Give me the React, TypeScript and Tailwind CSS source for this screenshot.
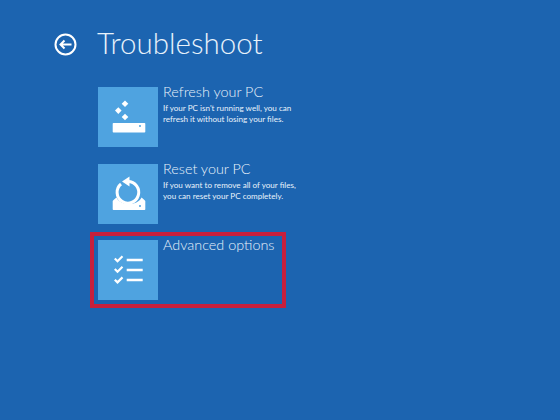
import { ReactNode } from "react";

function RefreshIcon() {
  return (
    <svg width="60" height="60" viewBox="0 0 60 60" fill="#fff">
      <path d="M27 13.500l3.300 3.300-3.300 3.300-3.300-3.300z" />
      <path d="M20.300 20.300l3.300 3.300-3.300 3.300-3.300-3.300z" />
      <path d="M27 26.700l3.300 3.300-3.300 3.300-3.300-3.300z" />
      <path fillRule="evenodd" d="M15.500 36h31a.8.8 0 0 1 .8.8v8a.8.800 0 0 1-.8.8h-31a.8.800 0 0 1-.8-.8v-8a.8.800 0 0 1 .8-.8zm26.500 2a1 1 0 1 0 0 2 1 1 0 0 0 0-2z" />
    </svg>
  );
}

function ResetIcon() {
  return (
    <svg width="60" height="60" viewBox="0 0 60 60" fill="#fff">
      <path fillRule="evenodd" d="M18.500 33.500c-1 1-3.300 2.500-3.800 3.500v8.200a.8.800 0 0 0 .8.8h31a.8.800 0 0 0 .8-.8V37c-.5-1-2.800-2.500-3.800-3.500-2 4-6.300 6.500-12.500 6.500s-10.500-2.500-12.500-6.500zm23.500 7.500a1 1 0 1 0 0 2 1 1 0 0 0 0-2z" />
      <path d="M23 20a10.800 10.800 0 1 0 7-2.500" fill="none" stroke="#fff" strokeWidth="3" />
      <path d="M31.500 12.500v10l-7.500-5z" />
    </svg>
  );
}

function OptionsIcon() {
  return (
    <svg width="60" height="60" viewBox="0 0 60 60" fill="none" stroke="#fff">
      <path d="M16.800 18.500l2.700 2.700 5-5M16.800 29l2.700 2.700 5-5M16.800 39.700l2.700 2.700 5-5" strokeWidth="2.200" />
      <path d="M28.700 20h16M28.700 30h16M28.700 40h16" strokeWidth="2.400" />
    </svg>
  );
}

function Option({ icon, title, lines, selected }: { icon: ReactNode; title: string; lines?: string[]; selected?: boolean }) {
  return (
    <div className={"flex h-[60px] w-[180px] gap-[5px] " + (selected ? "outline-4 outline-offset-[4px] outline-[#c8203c]" : "")}>
      <div className="h-[60px] w-[60px] shrink-0 bg-[#4fa3e0]">{icon}</div>
      <div className="whitespace-nowrap text-[#e8f2fb]">
        <div className="mt-[-5px] text-[14.400px] leading-[20px] font-light">{title}</div>
        {lines && (
          <div className="mt-[1px] text-[8.100px] leading-[11px]">
            {lines.map((l) => (
              <div key={l}>{l}</div>
            ))}
          </div>
        )}
      </div>
    </div>
  );
}

export default function App() {
  return (
    <div className="h-[420px] w-[560px] overflow-hidden bg-[#1c64b0] font-['Lato',sans-serif]">
      <div className="flex h-[44px] items-center pt-[22px] box-content pl-[54px]">
        <svg width="23" height="23" viewBox="0 0 23 23" fill="none" stroke="#fff" strokeWidth="2">
          <circle cx="11.500" cy="11.500" r="10" />
          <path d="M17.500 11.500H6.500M10.500 7.500l-4 4 4 4" />
        </svg>
        <h1 className="ml-[20px] mt-[1px] self-start text-[29.500px] leading-[40px] font-light text-[#e8f2fb]">Troubleshoot</h1>
      </div>
      <div className="mt-[21px] flex flex-col gap-[16.500px] pl-[98px]">
        <Option
          icon={<RefreshIcon />}
          title="Refresh your PC"
          lines={["If your PC isn't running well, you can", "refresh it without losing your files."]}
        />
        <Option
          icon={<ResetIcon />}
          title="Reset your PC"
          lines={["If you want to remove all of your files,", "you can reset your PC completely."]}
        />
        <Option icon={<OptionsIcon />} title="Advanced options" selected />
      </div>
    </div>
  );
}
